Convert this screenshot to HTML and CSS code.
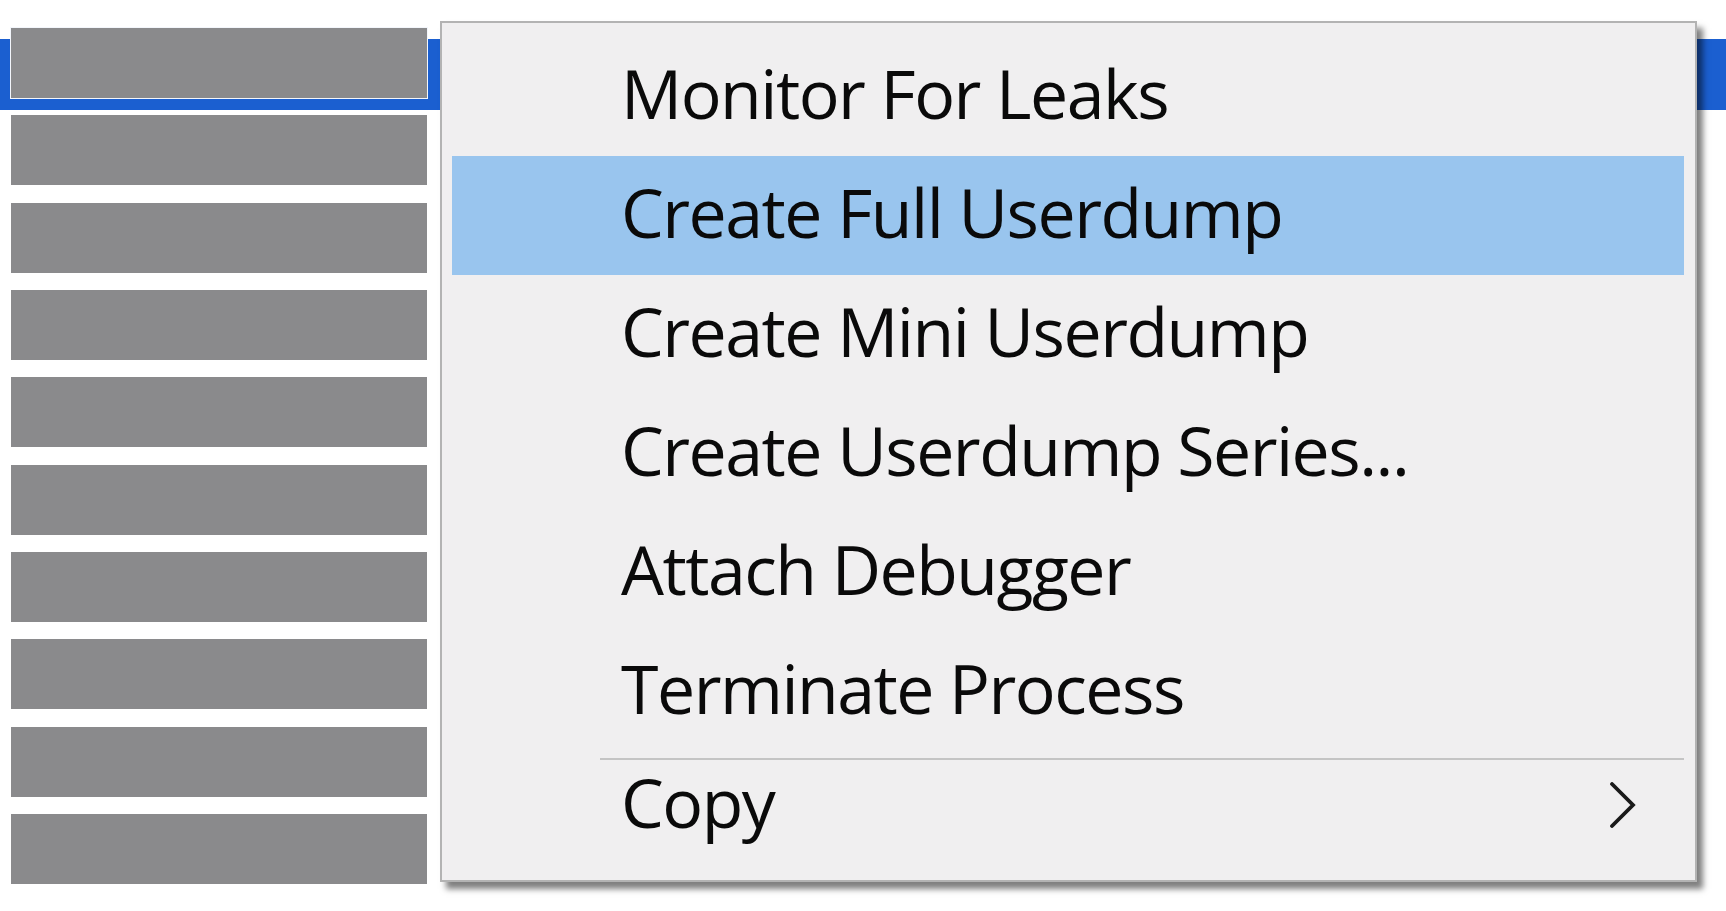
FILE: index.html
```html
<!DOCTYPE html>
<html lang="en">
<head>
<meta charset="utf-8">
<title>Process context menu</title>
<link rel="stylesheet" href="styles.css">
</head>
<body>
<div class="list">
  <div class="row selected"><div class="bar focused"></div></div>
  <div class="row"><div class="bar"></div></div>
  <div class="row"><div class="bar"></div></div>
  <div class="row"><div class="bar"></div></div>
  <div class="row"><div class="bar"></div></div>
  <div class="row"><div class="bar"></div></div>
  <div class="row"><div class="bar"></div></div>
  <div class="row"><div class="bar"></div></div>
  <div class="row"><div class="bar"></div></div>
  <div class="row"><div class="bar"></div></div>
</div>

<div class="menu">
  <div class="item">Monitor For Leaks</div>
  <div class="item hover">Create Full Userdump</div>
  <div class="item">Create Mini Userdump</div>
  <div class="item">Create Userdump Series...</div>
  <div class="item">Attach Debugger</div>
  <div class="item">Terminate Process</div>
  <div class="sep"></div>
  <div class="item last">
    <span>Copy</span>
    <svg class="chev" width="27" height="46" viewBox="0 0 27 46"><polyline points="3,2 24,23 3,44" fill="none" stroke="#1a1a1a" stroke-width="3.8" stroke-linecap="round" stroke-linejoin="miter"/></svg>
  </div>
</div>
</body>
</html>
```

FILE: styles.css
```css
html, body {
  margin: 0;
  padding: 0;
  background: #ffffff;
  width: 1726px;
  height: 911px;
  overflow: hidden;
  font-family: "Open Sans", "Noto Sans", "DejaVu Sans", sans-serif;
}

.list {
  padding-top: 28px;
  display: flex;
  flex-direction: column;
}

.row {
  height: 87.35px;
  padding-left: 11px;
  box-sizing: border-box;
}

.row.selected {
  background: linear-gradient(to bottom,
    transparent 0, transparent 11px,
    #1b5fd0 11px, #1b5fd0 82px,
    transparent 82px);
}

.bar {
  width: 416px;
  height: 70px;
  background: #8a8a8c;
}

.bar.focused {
  box-shadow: 0 0 0 1px #f3f6fb;
}

.menu {
  position: absolute;
  left: 440px;
  top: 21px;
  width: 1257px;
  height: 861px;
  box-sizing: border-box;
  background: #f0eff0;
  border: 2px solid #b3b3b3;
  box-shadow: 6px 7px 6px rgba(0, 0, 0, 0.5);
  padding: 14px 11px 0 10px;
  display: flex;
  flex-direction: column;
}

.item {
  font-size: 68px;
  letter-spacing: -1.5px;
  line-height: 111px;
  padding-bottom: 8px;
  padding-left: 169px;
  color: #0a0a0a;
  white-space: nowrap;
}

.item.hover {
  background: #99c5ee;
}

.sep {
  height: 2px;
  background: #c4c4c4;
  margin: 7px 0 0 148px;
}

.item.last {
  line-height: 83px;
  padding-bottom: 0;
  display: flex;
  align-items: center;
  justify-content: space-between;
  padding-right: 48px;
}

.chev {
  display: block;
  margin-top: 6px;
}
```
